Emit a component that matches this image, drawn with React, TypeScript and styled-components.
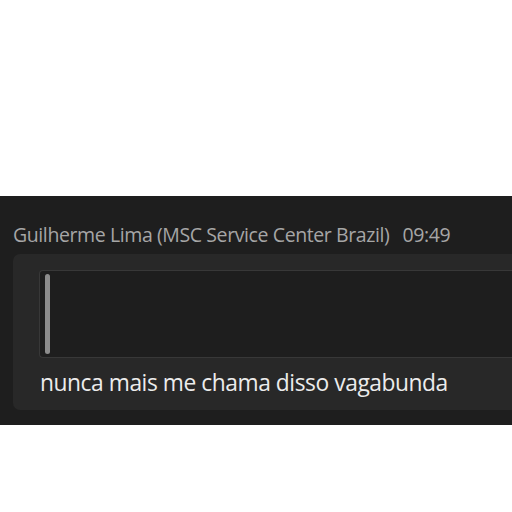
import React from 'react';
import styled, { createGlobalStyle } from 'styled-components';

const GlobalStyle = createGlobalStyle`
  html, body {
    margin: 0;
    padding: 0;
    background: #ffffff;
    overflow: hidden;
  }
`;

const Page = styled.div`
  width: 512px;
  height: 512px;
  padding-top: 196px;
  box-sizing: border-box;
`;

const Band = styled.div`
  height: 229px;
  background: #1e1e1e;
  padding: 27px 0 0 13px;
  box-sizing: border-box;
  font-family: 'Open Sans', 'Noto Sans', sans-serif;
  overflow: hidden;
`;

const Header = styled.div`
  display: flex;
  align-items: baseline;
  gap: 13px;
  color: #a6a6a6;
  font-size: 19.5px;
  line-height: 24px;
  letter-spacing: -0.4px;
  white-space: nowrap;
`;

const Bubble = styled.div`
  margin-top: 7px;
  width: 560px;
  height: 156px;
  background: #282828;
  border-radius: 7px;
  padding: 16px 0 0 26px;
  box-sizing: border-box;
`;

const Quote = styled.div`
  height: 88px;
  background: #1e1e1e;
  border: 1px solid #383838;
  border-right: none;
  border-radius: 4px 0 0 4px;
  padding: 3px 0 3px 5px;
  box-sizing: border-box;
  display: flex;
`;

const QuoteBar = styled.div`
  width: 5px;
  height: 100%;
  background: #8c8c8c;
  border-radius: 3px;
`;

const Message = styled.div`
  margin-top: 10px;
  margin-left: 1px;
  color: #ececec;
  font-size: 22.8px;
  font-weight: 500;
  line-height: 30px;
  letter-spacing: -0.45px;
  white-space: nowrap;
`;

export default function App() {
  return (
    <>
      <GlobalStyle />
      <Page>
        <Band>
          <Header>
            <span>Guilherme Lima (MSC Service Center Brazil)</span>
            <span>09:49</span>
          </Header>
          <Bubble>
            <Quote>
              <QuoteBar />
            </Quote>
            <Message>nunca mais me chama disso vagabunda</Message>
          </Bubble>
        </Band>
      </Page>
    </>
  );
}
